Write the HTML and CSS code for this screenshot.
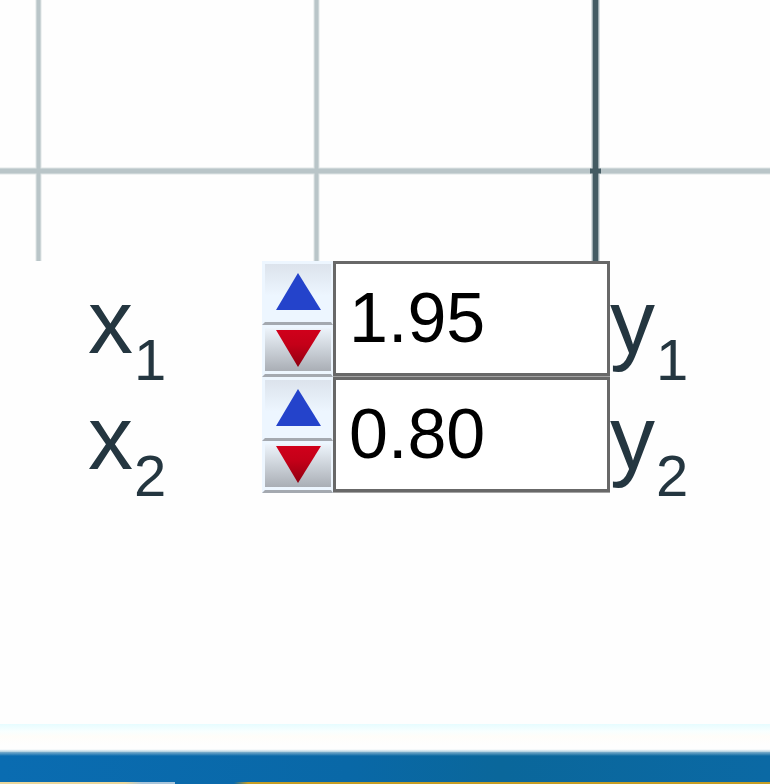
FILE: index.html
```html
<!DOCTYPE html>
<html lang="en">
<head>
<meta charset="utf-8">
<meta name="viewport" content="width=device-width, initial-scale=1">
<title>Coordinates</title>
<link rel="stylesheet" href="styles.css">
</head>
<body>
<main class="page">
  <svg class="graph" aria-hidden="true">
    <g class="grid-halo"><path d="M38.5 0V261M316.5 0V261"/><path class="wide" d="M0 171H4000"/></g>
    <g class="grid-line"><path d="M38.5 0V261M316.5 0V261"/><path class="wide" d="M0 171H4000"/></g>
    <path class="axis-halo" d="M595.5 0V261"/>
    <path class="axis-soft" d="M595.5 0V261"/>
    <path class="axis" d="M595.5 0V261"/>
    <path class="axis-tick" d="M590 171H601"/>
  </svg>
  <form class="points">
    <div class="row">
      <label class="name" for="x1">x<sub>1</sub></label>
      <div class="spinner">
        <button class="step up" type="button" aria-label="Increase"><svg viewBox="0 0 46 38"><path fill="#2443cb" d="M23 0L46 37H1Z"/></svg></button>
        <button class="step down" type="button" aria-label="Decrease"><svg viewBox="0 0 46 38"><defs><linearGradient id="red1" x2="0" y2="1"><stop stop-color="#d0001b"/><stop offset=".4" stop-color="#c40018"/><stop offset="1" stop-color="#900010"/></linearGradient></defs><path fill="url(#red1)" d="M1 0H46L23 37Z"/></svg></button>
      </div>
      <input class="value" id="x1" type="text" value="1.95">
      <span class="name next">y<sub>1</sub></span>
    </div>
    <div class="row">
      <label class="name" for="x2">x<sub>2</sub></label>
      <div class="spinner">
        <button class="step up" type="button" aria-label="Increase"><svg viewBox="0 0 46 38"><path fill="#2443cb" d="M23 0L46 37H1Z"/></svg></button>
        <button class="step down" type="button" aria-label="Decrease"><svg viewBox="0 0 46 38"><path fill="url(#red1)" d="M1 0H46L23 37Z"/></svg></button>
      </div>
      <input class="value" id="x2" type="text" value="0.80">
      <span class="name next">y<sub>2</sub></span>
    </div>
  </form>
  <footer class="bar">
    <div class="fade"></div>
    <div class="blue"></div>
    <div class="trim"></div>
  </footer>
</main>
</body>
</html>
```
FILE: styles.css
```css
* { box-sizing: border-box; }

body {
  margin: 0;
  background: #fefefe;
  color: #243640;
  font-family: "Liberation Sans", Arial, sans-serif;
}

.page {
  display: flex;
  flex-direction: column;
  min-height: 100vh;
  overflow: hidden;
}

.graph {
  display: block;
  width: 100%;
  height: 261px;
  flex: none;
}

.graph path { fill: none; }
.grid-halo { stroke: #dfe5e6; stroke-width: 6; }
.grid-halo .wide { stroke-width: 7; }
.grid-line { stroke: #b9c5c8; stroke-width: 4; }
.grid-line .wide { stroke-width: 5; }
.axis-halo { stroke: #d9dfe1; stroke-width: 9; }
.axis-soft { stroke: #9dabb0; stroke-width: 7; }
.axis { stroke: #445b63; stroke-width: 5; }
.axis-tick { stroke: #445b63; stroke-width: 5; }

.row {
  display: grid;
  grid-template-columns: 262px 71px 277px 1fr;
  height: 116px;
}

.name {
  padding-left: 88px;
  font-size: 90px;
  line-height: 122px;
  height: 116px;
  white-space: nowrap;
}

.name.next { padding-left: 0; }

.name sub {
  position: relative;
  top: 27px;
  margin-left: 1px;
  font-size: 58px;
  line-height: 0;
  vertical-align: baseline;
}

.spinner {
  display: grid;
  grid-template-rows: 64px 52px;
}

.step {
  display: flex;
  justify-content: center;
  align-items: flex-start;
  padding: 0;
  border: 3px solid #edf6ff;
  border-right-width: 2px;
  border-bottom-color: #a4a9b0;
  border-radius: 0;
}

.step svg {
  display: block;
  width: 46px;
  height: 38px;
}

.up {
  padding-top: 9px;
  background: linear-gradient(#dce3ec, #edf6ff 55%, #edf6ff);
}

.down {
  padding-top: 2px;
  background: linear-gradient(#edf4fb, #c9cfd6 50%, #a5a9b0);
  box-shadow: inset 0 -3px #edf6ff;
}

.value {
  width: 100%;
  height: 115px;
  padding: 0 0 2px 13px;
  border: 3px solid #686868;
  border-radius: 0;
  box-shadow: 0 1px #a4a4a4;
  background: #fff;
  color: #000;
  font-family: inherit;
  font-size: 70px;
}

.bar { margin-top: auto; }

.fade {
  height: 28px;
  background: linear-gradient(#e6fcff, #f8ffff 25%, #fffdf9 45%, #fefefe 75%, #fefefe 90%, #a9cbdc);
}

.blue {
  height: 30px;
  background:
    linear-gradient(#7fafcc, transparent 4px),
    linear-gradient(90deg, #0a6cb1, #0968a7 45%, #0a679b 65%, #0b69a4);
}

.trim {
  height: 2px;
  background:
    linear-gradient(90deg, #ead69b 0 125px, #a9c5da 142px 175px, #0a6aab 175px 234px, #c59d25 248px);
}
```
